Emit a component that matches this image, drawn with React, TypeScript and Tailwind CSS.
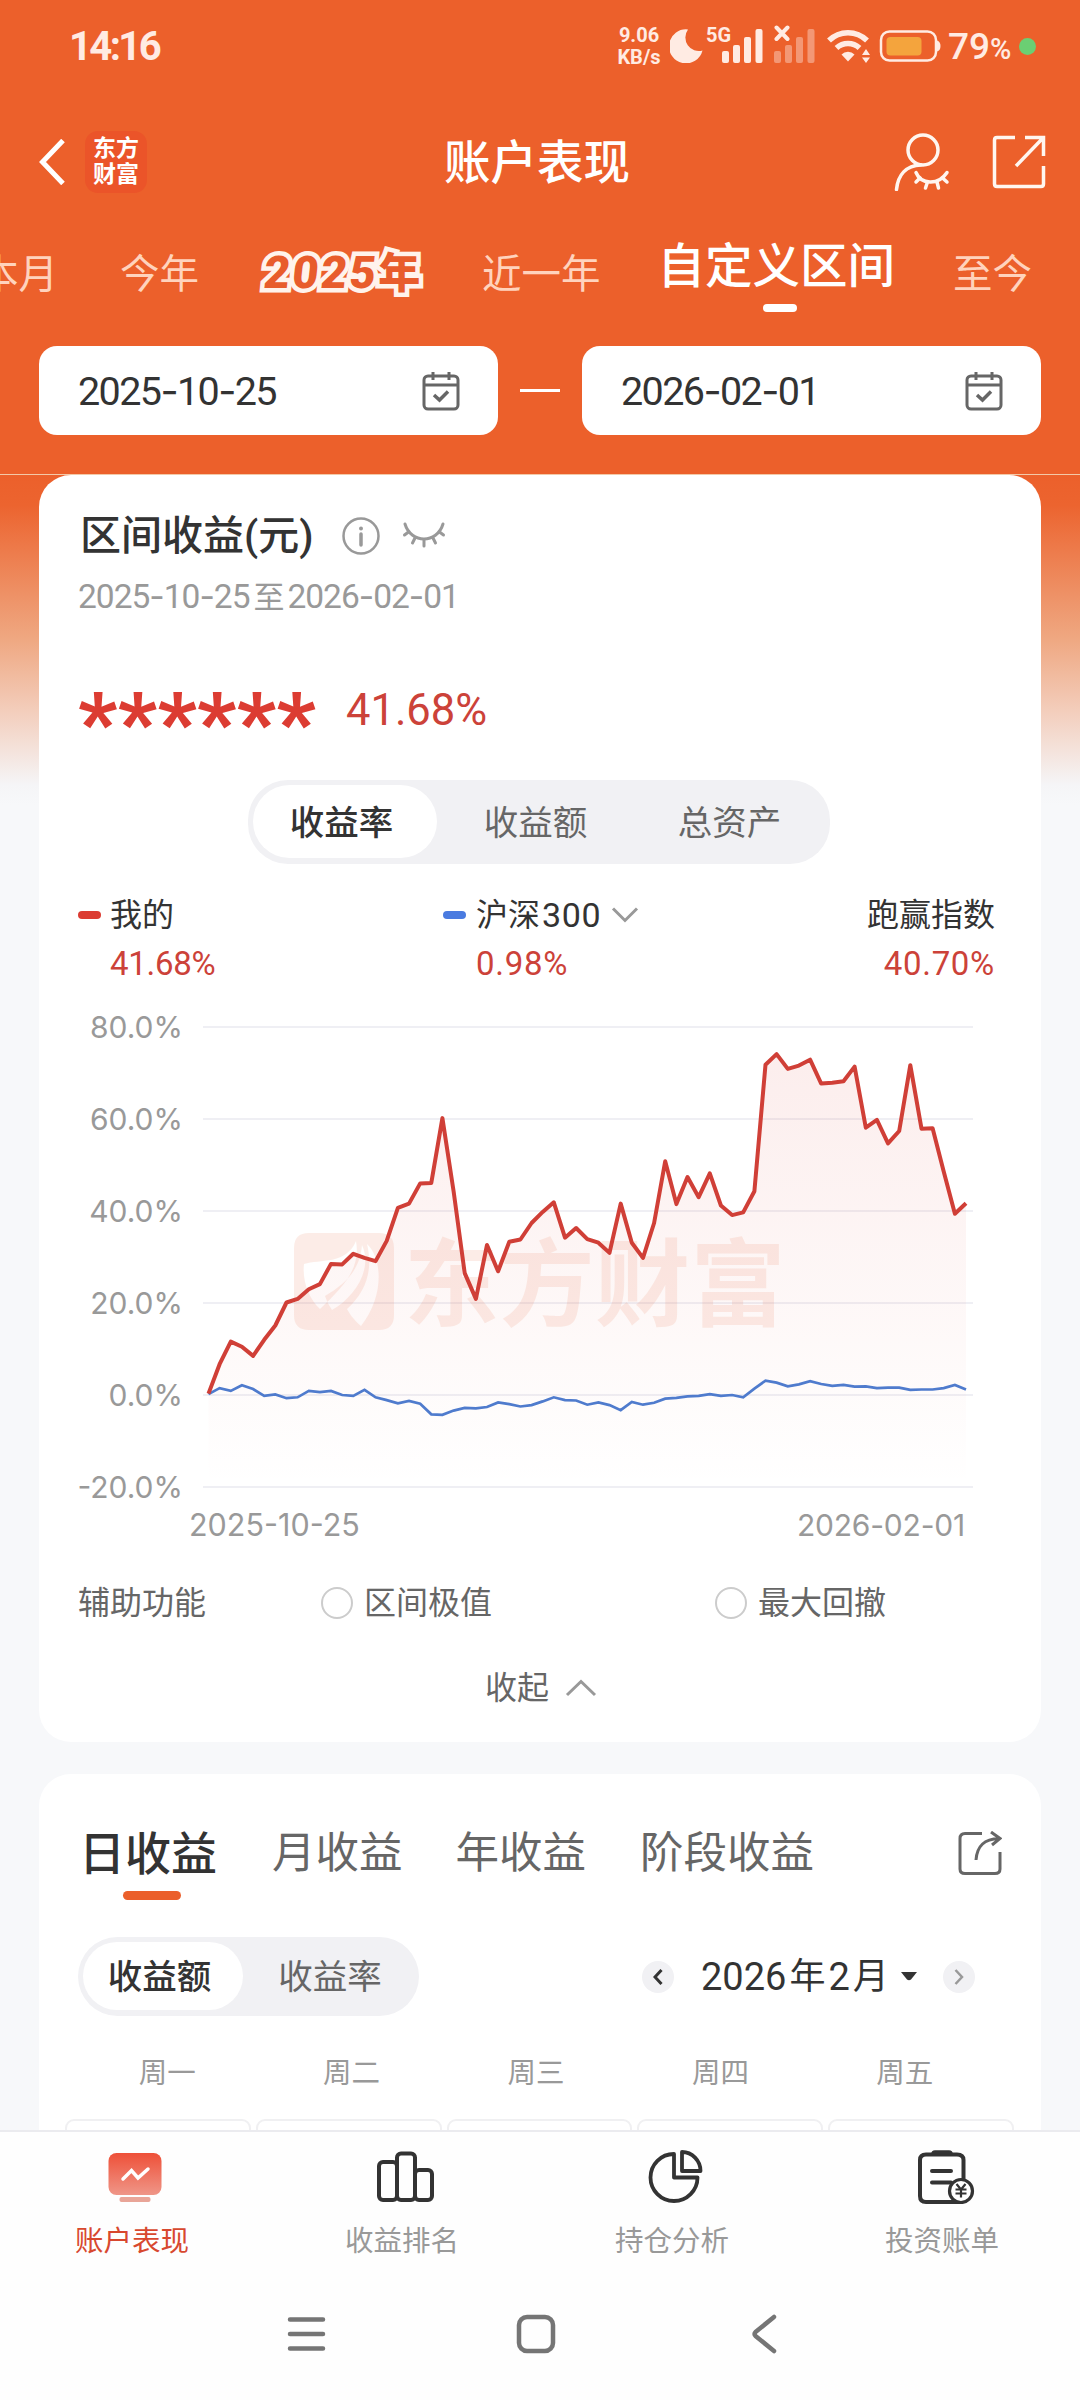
import React from "react";

const MINE = [
  0.3, 6.7, 11.6, 10.5, 8.5, 12.0, 15.1, 20.1, 20.9, 23.0, 24.1, 28.5, 28.4, 30.7, 29.8, 29.1, 33.5,
  40.7, 41.6, 46.0, 46.1, 60.2, 44.3, 26.5, 20.9, 32.6, 26.9, 33.3, 33.8, 37.4, 39.8, 41.9, 34.2, 36.3,
  33.9, 33.1, 30.9, 41.6, 33.1, 29.8, 37.4, 50.8, 41.5, 47.4, 43.0, 48.2, 41.2, 39.1, 39.7, 44.3, 71.8,
  74.1, 70.9, 71.6, 72.9, 67.7, 67.9, 68.2, 71.4, 58.1, 59.8, 54.7, 57.4, 71.7, 57.9, 58.0, 48.6, 39.4,
  41.7,
];

const CSI300 = [
  0.2, 1.5, 0.9, 2.1, 1.3, -0.2, 0.1, -0.7, -0.5, 0.9, 0.6, 0.9, 0, -0.2, 1.1, -0.5, -1.1, -1.8, -1.3,
  -1.9, -4.2, -4.3, -3.4, -2.8, -2.9, -2.6, -1.6, -2.0, -2.5, -2.2, -1.4, -0.5, -1.1, -1.2, -2.1, -1.6,
  -2.2, -3.3, -1.5, -2.1, -1.7, -0.8, -0.6, -0.3, -0.2, 0.2, -0.2, 0, -0.5, 1.4, 3.1, 2.7, 1.9, 2.3,
  3.0, 2.4, 2.0, 2.2, 1.8, 1.9, 1.5, 1.6, 1.6, 1.1, 1.2, 1.2, 1.5, 2.2, 1.2,
];

const Y_TICKS = [80, 60, 40, 20, 0, -20];

const yOf = (v: number) => 20 + (80 - v) * 4.6;
const xOf = (i: number) => 5.5 + i * 11.14;
const toPoints = (data: number[]) =>
  data.map((v, i) => `${xOf(i).toFixed(1)},${yOf(v).toFixed(1)}`).join(" ");

// Digits stay in Roboto, only the dashes use Inter's wider hyphen
function DateText({ value }: { value: string }) {
  const [y, m, d] = value.split("-");
  return (
    <span>
      {y}
      <span className="font-[Inter]">-</span>
      {m}
      <span className="font-[Inter]">-</span>
      {d}
    </span>
  );
}

function SignalBars({ dim = false }: { dim?: boolean }) {
  return (
    <svg width="41" height="34" viewBox="0 0 41 34" fill="#ffebe3" opacity={dim ? 0.4 : 1}>
      <rect x="0" y="22" width="7" height="12" rx="2" />
      <rect x="11" y="16" width="7" height="18" rx="2" />
      <rect x="22" y="8" width="7" height="26" rx="2" />
      <rect x="33.5" y="0" width="7" height="34" rx="2" />
    </svg>
  );
}

function StatusBar() {
  return (
    <div className="flex h-[92px] items-center pr-[44px] pl-[69px] text-[#ffebe3]">
      <span className="pt-[2px] text-[40px] leading-none font-bold tracking-[-2.6px]">14:16</span>
      <div className="ml-auto flex items-center">
        <div className="w-[44px] text-center text-[20px] leading-[22px] font-bold">
          <div>9.06</div>
          <div>KB/s</div>
        </div>
        <svg className="ml-[9px]" width="33" height="34" viewBox="0 0 33 34" fill="#ffebe3">
          <path d="M18 0.5 A17 17 0 1 0 32.5 21.5 A13.5 13.5 0 0 1 18 0.5 Z" />
        </svg>
        <div className="relative ml-[19px] flex">
          <span className="absolute top-[-4px] left-[-16px] text-[20px] leading-none font-bold">5G</span>
          <SignalBars />
        </div>
        <div className="relative ml-[11px] flex">
          <svg className="absolute top-[-4px] left-0" width="16" height="17" viewBox="0 0 16 17" stroke="#ffebe3" strokeWidth="4" strokeLinecap="round">
            <path d="M2.5 2.5 L13.5 14 M13.5 2.5 L2.5 14" />
          </svg>
          <SignalBars dim />
        </div>
        <svg className="ml-[11px]" width="46" height="34" viewBox="0 0 46 34" fill="none" stroke="#ffebe3">
          <path d="M3 11.5 A27 27 0 0 1 41 11.5" strokeWidth="5.5" />
          <path d="M10.5 19 A17 17 0 0 1 33.5 19" strokeWidth="5.5" />
          <path d="M15.5 25.5 A9 9 0 0 1 28.5 25.5 L22 32.5 Z" fill="#ffebe3" stroke="none" />
          <path d="M36 26 L40 20 L44 26 Z M36 28.5 L44 28.5 L40 34 Z" fill="#ffebe3" stroke="none" />
        </svg>
        <svg className="ml-[7px]" width="62" height="34" viewBox="0 0 62 34">
          <rect x="2" y="2.5" width="55" height="29" rx="8.5" fill="none" stroke="#ffebe3" strokeWidth="2.5" />
          <rect x="7.5" y="8" width="35" height="18.5" rx="4" fill="#f4a43d" />
          <path d="M58 11.5 q3.5 1 3.5 5.5 t-3.5 5.5 Z" fill="#ffebe3" />
        </svg>
        <div className="ml-[7px] flex w-[66px] items-baseline leading-none font-medium">
          <span className="text-[37px]">79</span>
          <span className="text-[29px]">%</span>
        </div>
        <span className="ml-[5px] h-[17px] w-[17px] rounded-full bg-[#6bcf73]" />
      </div>
    </div>
  );
}

function TitleBar() {
  return (
    <div className="flex h-[140px] items-center pr-[34px] pl-[39px]">
      <svg width="26" height="46" viewBox="0 0 26 46" fill="none" stroke="#fff" strokeWidth="5">
        <path d="M24 1.5 L3.5 23 L24 44.5" />
      </svg>
      <div className="ml-[20px] flex h-[62px] w-[62px] flex-col items-center justify-center rounded-[13px] bg-[#eb5429] text-[23px] leading-[26px] font-bold text-white">
        <span>东方</span>
        <span>财富</span>
      </div>
      <h1 className="mt-[3px] ml-[297px] text-[46.5px] leading-none font-medium text-white">账户表现</h1>
      <svg className="ml-auto" width="56" height="58" viewBox="0 0 56 58" fill="none" stroke="#fff6f0" strokeWidth="3.5">
        <circle cx="29" cy="17" r="15" />
        <path d="M2.5 56.5 C4 42 12 32.5 27 32" strokeLinecap="round" />
        <path d="M22 39.5 C27 51.5 44 53 53 39.5" strokeLinecap="round" />
        <path d="M26 45 L22 49 M33.5 49 L31.5 55 M43 49 L44.5 55 M48.5 45 L53 49" strokeLinecap="round" />
      </svg>
      <svg className="ml-[42px]" width="54" height="54" viewBox="0 0 54 54" fill="none" stroke="#fff6f0" strokeWidth="3.5">
        <path d="M23 2.5 H5 Q2.5 2.5 2.5 5 V49 Q2.5 51.5 5 51.5 H49 Q51.5 51.5 51.5 49 V31" />
        <path d="M33 2.5 H51.5 V21 M51 3 L24 31" />
      </svg>
    </div>
  );
}

function RangeTabs() {
  return (
    <div className="flex h-[91px] items-start pt-[18px] text-[39.5px] leading-[46px] whitespace-nowrap text-[#ffd3bd]">
      <span className="ml-[-21px] pt-[2px]">本月</span>
      <span className="ml-[62px] pt-[2px]">今年</span>
      <span className="ml-[59px] flex w-[168px] items-baseline justify-center font-bold text-[#e85c2c] [-webkit-text-stroke:9px_#fff3ec] [paint-order:stroke_fill]">
        <span className="-skew-x-6 text-[45px] font-black tracking-[2.5px]">2025</span>
        <span className="text-[42px] font-black">年</span>
      </span>
      <span className="ml-[56px] pt-[2px]">近一年</span>
      <div className="ml-[57px] flex flex-col items-center text-[47.5px] font-medium text-white">
        <span className="mt-[-6px]">自定义区间</span>
        <span className="mt-[14px] ml-[8px] h-[8px] w-[34px] rounded-full bg-white" />
      </div>
      <span className="ml-[58px] pt-[2px]">至今</span>
    </div>
  );
}

function DateInput({ value }: { value: string }) {
  return (
    <div className="flex h-[89px] w-[459px] items-center justify-between rounded-[18px] bg-white pr-[38px] pl-[39px]">
      <span className="pt-[3px] text-[39.5px] leading-none tracking-[-1.6px] text-[#333]">
        <DateText value={value} />
      </span>
      <svg width="38" height="40" viewBox="0 0 38 40" fill="none" stroke="#666" strokeWidth="3">
        <rect x="2" y="5" width="34" height="33" rx="4" />
        <path d="M2 14 H36 M11 1 V9 M27 1 V9" />
        <path d="M12 24 L17.5 29 L26 20.5" strokeWidth="3.5" />
      </svg>
    </div>
  );
}

function Segmented({ items, className, activeClass }: { items: string[]; className: string; activeClass: string }) {
  return (
    <div className={`flex rounded-[40px] bg-[#f1f1f4] text-[34.5px] leading-none text-[#666] ${className}`}>
      {items.map((label, i) => (
        <div key={label} className="flex flex-1 items-center pt-[5px] pb-[6px] pl-[5px]">
          <span
            className={`flex h-full items-center justify-center rounded-[38px] pt-[3px] pr-[7px] ${activeClass} ${
              i === 0 ? "bg-white font-medium text-[#333]" : ""
            }`}
          >
            {label}
          </span>
        </div>
      ))}
    </div>
  );
}

function Watermark() {
  return (
    <g fill="#e8602c" opacity="0.11">
      <path
        fillRule="evenodd"
        d="M106 226 h70 q15 0 15 15 v67 q0 15 -15 15 h-70 q-15 0 -15 -15 v-67 q0 -15 15 -15 Z
          M101 257 C117 252 143 258 153 234 C158 262 140 280 117 302 C106 292 99 274 101 257 Z
          M159 238 C170 262 152 290 129 303 Q124 296 122 289 C144 276 157 262 159 238 Z
          M164 237 C180 252 181 290 158 319 C150 312 146 306 144 302 C164 284 170 262 164 237 Z"
      />
      <text x="201" y="312" fontSize="95" fontWeight="700" letterSpacing="0.5" fontFamily="Noto Sans CJK SC, sans-serif">
        东方财富
      </text>
    </g>
  );
}

function Chart() {
  const line = toPoints(MINE);
  return (
    <div className="font-[Inter] text-[30px] leading-[40px] text-[#999]">
      <div className="flex">
        <div className="flex h-[500px] w-[105px] flex-col items-end justify-between whitespace-nowrap">
          {Y_TICKS.map((t) => (
            <span key={t}>{t.toFixed(1)}%</span>
          ))}
        </div>
        <svg className="ml-[20px]" width="770" height="500" viewBox="0 0 770 500">
          <defs>
            <linearGradient id="area" x1="0" y1="0" x2="0" y2="1">
              <stop offset="0" stopColor="#dc3c32" stopOpacity="0.09" />
              <stop offset="1" stopColor="#dc3c32" stopOpacity="0" />
            </linearGradient>
          </defs>
          {Y_TICKS.map((t) => (
            <line key={t} x1="0" x2="770" y1={yOf(t)} y2={yOf(t)} stroke="#efeff4" strokeWidth="2" />
          ))}
          <Watermark />
          <polygon points={`${xOf(0)},480 ${line} ${xOf(68)},480`} fill="url(#area)" />
          <polyline points={toPoints(CSI300)} fill="none" stroke="#4f7bcd" strokeWidth="2.7" />
          <polyline points={line} fill="none" stroke="#d03f37" strokeWidth="4" strokeLinejoin="round" />
        </svg>
      </div>
      <div className="flex h-[35px] items-center justify-between pr-[37px] pl-[111px]">
        <span className="text-[30.5px]">2025-10-25</span>
        <span className="text-[30px] tracking-[-0.2px]">2026-02-01</span>
      </div>
    </div>
  );
}

function EarningsCard() {
  return (
    <section className="h-[1267px] rounded-[32px] bg-white px-[39px] pt-[31px]">
      <div className="flex h-[60px] items-center">
        <h2 className="ml-[2px] text-[41px] leading-none font-medium text-[#333]">区间收益(元)</h2>
        <svg className="ml-[28px]" width="38" height="38" viewBox="0 0 38 38" fill="none" stroke="#999" strokeWidth="2.5">
          <circle cx="19" cy="19" r="17.5" />
          <path d="M19 17 V28" strokeWidth="3.5" strokeLinecap="round" />
          <circle cx="19" cy="11.5" r="2" fill="#999" stroke="none" />
        </svg>
        <svg className="ml-[22px] mt-[-2px]" width="44" height="26" viewBox="0 0 44 26" fill="none" stroke="#999" strokeWidth="3" strokeLinecap="round">
          <path d="M3 2 C9 22 35 22 41 2" />
          <path d="M6.5 10 L2.5 13 M13 16 L10.5 21 M22 18 V24 M31 16 L33.5 21 M37.5 10 L41.5 13" />
        </svg>
      </div>
      <div className="mt-[11px] flex h-[40px] items-center text-[33.5px] leading-none tracking-[-1px] text-[#999]">
        <DateText value="2025-10-25" />
        <span className="mx-[4px] text-[31px]">至</span>
        <DateText value="2026-02-01" />
      </div>
      <div className="mt-[64px] flex h-[60px] items-center text-[#dc3c32]">
        <span className="h-[60px] w-[268px] text-[84px] leading-[83px] font-black tracking-[0.6px]">******</span>
        <span className="text-[43.5px] leading-none text-[#cc4239]">41.68%</span>
      </div>
      <Segmented items={["收益率", "收益额", "总资产"]} className="mt-[39px] ml-[170px] h-[84px] w-[582px]" activeClass="w-[184px]" />
      <div className="mt-[32px] flex h-[87px] text-[33px] leading-[38px] text-[#333]">
        <div className="flex w-[365px]">
          <span className="mt-[15px] h-[8px] w-[23px] rounded-full bg-[#dc3c32]" />
          <div className="ml-[9px] flex flex-col gap-[11px]">
            <span className="text-[32px]">我的</span>
            <span className="tracking-[-0.3px] text-[#cc4239]">41.68%</span>
          </div>
        </div>
        <div className="flex">
          <span className="mt-[15px] h-[8px] w-[23px] rounded-full bg-[#4a7be0]" />
          <div className="ml-[10px] flex flex-col gap-[11px]">
            <span className="flex items-center text-[32px]">
              沪深<span className="ml-[2px] text-[34px] tracking-[0.6px]">300</span>
              <svg className="ml-[10px]" width="28" height="16" viewBox="0 0 28 16" fill="none" stroke="#999" strokeWidth="3">
                <path d="M2 1.5 L14 13.5 L26 1.5" />
              </svg>
            </span>
            <span className="tracking-[0.7px] text-[#cc4239]">0.98%</span>
          </div>
        </div>
        <div className="ml-auto flex flex-col items-end gap-[11px] pr-[7px]">
          <span className="text-[32px]">跑赢指数</span>
          <span className="tracking-[0.7px] text-[#cc4239]">40.70%</span>
        </div>
      </div>
      <div className="mt-[24px]">
        <Chart />
      </div>
      <div className="mt-[41px] flex h-[40px] items-center text-[32px] leading-none text-[#666]">
        <span>辅助功能</span>
        <span className="ml-[115px] h-[32px] w-[32px] rounded-full border-2 border-[#ccc]" />
        <span className="ml-[11px]">区间极值</span>
        <span className="ml-[223px] h-[32px] w-[32px] rounded-full border-2 border-[#ccc]" />
        <span className="ml-[11px]">最大回撤</span>
      </div>
      <div className="mt-[45px] flex h-[40px] items-center pl-[407px] text-[32px] leading-none text-[#666]">
        <span>收起</span>
        <svg className="ml-[16px]" width="32" height="18" viewBox="0 0 32 18" fill="none" stroke="#999" strokeWidth="3">
          <path d="M2 16 L16 2.5 L30 16" />
        </svg>
      </div>
    </section>
  );
}

function CalendarCard() {
  return (
    <section className="mt-[32px] h-[400px] rounded-t-[32px] bg-white pt-[54px]">
      <div className="flex items-start pr-[39px] pl-[40px] text-[43.5px] leading-[52px] text-[#666]">
        <div className="flex flex-col items-center text-[46px] font-medium text-[#333]">
          <span>日收益</span>
          <span className="mt-[11px] ml-[8px] h-[9px] w-[58px] rounded-full bg-[#eb5f2b]" />
        </div>
        <span className="ml-[55px]">月收益</span>
        <span className="ml-[53px]">年收益</span>
        <span className="ml-[54px]">阶段收益</span>
        <svg className="mt-[3px] ml-auto" width="44" height="44" viewBox="0 0 44 44" fill="none" stroke="#666" strokeWidth="3">
          <path d="M24 2.5 H7 Q2 2.5 2 7.5 V38 Q2 42.5 7 42.5 H37 Q42 42.5 42 38 V21" />
          <path d="M18 29 C19 15 26 8 41 7.5 M33 1 L42 7.5 L34 14" />
        </svg>
      </div>
      <div className="mt-[37px] flex items-center pl-[39px]">
        <Segmented items={["收益额", "收益率"]} className="h-[79px] w-[341px]" activeClass="w-[160px]" />
        <span className="ml-[223px] flex h-[32px] w-[32px] items-center justify-center rounded-full bg-[#f1f1f4]">
          <svg width="10" height="16" viewBox="0 0 10 16" fill="none" stroke="#333" strokeWidth="3">
            <path d="M8.5 1 L2 8 L8.5 15" />
          </svg>
        </span>
        <span className="ml-[27px] flex items-center text-[38px] leading-none text-[#333]">
          <span>2026</span>
          <span className="mx-[3px] text-[36px]">年</span>
          <span>2</span>
          <span className="mx-[3px] text-[36px]">月</span>
        </span>
        <svg className="ml-[9px]" width="16" height="9" viewBox="0 0 16 9" fill="#333">
          <path d="M0 0 H16 L10 7.5 Q8 9 6 7.5 Z" />
        </svg>
        <span className="ml-[26px] flex h-[32px] w-[32px] items-center justify-center rounded-full bg-[#f1f1f4]">
          <svg width="10" height="16" viewBox="0 0 10 16" fill="none" stroke="#999" strokeWidth="2.5">
            <path d="M1.5 1 L8 8 L1.5 15" />
          </svg>
        </span>
      </div>
      <div className="mt-[38px] ml-[36px] grid h-[40px] w-[922px] grid-cols-5 items-center text-center text-[28.5px] leading-none text-[#999]">
        {["一", "二", "三", "四", "五"].map((d) => (
          <span key={d}>周{d}</span>
        ))}
      </div>
      <div className="mt-[25px] ml-[26px] grid w-[949px] grid-cols-5 gap-[5px]">
        {[0, 1, 2, 3, 4].map((i) => (
          <div key={i} className="h-[120px] rounded-[9px] border-2 border-[#f0f0f2]" />
        ))}
      </div>
    </section>
  );
}

function PerformanceIcon() {
  return (
    <svg width="58" height="54" viewBox="0 0 58 54" fill="none">
      <defs>
        <linearGradient id="perf" x1="0" y1="0" x2="0" y2="1">
          <stop offset="0" stopColor="#ee5038" />
          <stop offset="1" stopColor="#ef9688" />
        </linearGradient>
      </defs>
      <rect x="2.5" y="3" width="53" height="42" rx="8" fill="url(#perf)" />
      <rect x="13.5" y="47" width="31" height="5" rx="2" fill="#e9a598" />
      <path d="M17 29 L25.5 20.5 L32 28 L42 19" stroke="#fff" strokeWidth="3.5" strokeLinecap="round" />
    </svg>
  );
}

function RankIcon() {
  return (
    <svg width="58" height="54" viewBox="0 0 58 54" fill="none" stroke="#333" strokeWidth="4">
      <rect x="3" y="12" width="18" height="38" rx="4" />
      <rect x="21" y="3.5" width="18" height="46.5" rx="4" />
      <rect x="39" y="20" width="17" height="30" rx="4" />
    </svg>
  );
}

function PieIcon() {
  return (
    <svg width="58" height="54" viewBox="0 0 58 54" fill="none" stroke="#333" strokeWidth="3.8" strokeLinejoin="round">
      <path d="M28 4 A23.5 23.5 0 1 0 51.5 27.5 H28 Z" />
      <path d="M36 2 V21 H54.5 A18.5 19 0 0 0 36 2 Z" />
    </svg>
  );
}

function BillIcon() {
  return (
    <svg width="60" height="54" viewBox="0 0 60 54" fill="none" stroke="#333" strokeWidth="4">
      <path d="M46 52 H11 Q5 52 5 46 V10 Q5 4.5 11 4.5 H42 Q48.5 4.5 48.5 10 V30" />
      <path d="M17 4 Q17 1 20 1 H34 Q37 1 37 4 Z" fill="#333" strokeWidth="1.5" />
      <path d="M17 21 H36 M17 32.5 H36" strokeLinecap="round" />
      <circle cx="46" cy="41" r="11.5" fill="#fff" strokeWidth="3.2" />
      <path d="M41.5 34 L46 39.5 L50.5 34 M46 39.5 V47.5 M40.5 39.5 H51.5 M40.5 43.5 H51.5" strokeWidth="2.2" />
    </svg>
  );
}

const NAV = [
  { label: "账户表现", icon: <PerformanceIcon />, active: true },
  { label: "收益排名", icon: <RankIcon />, active: false },
  { label: "持仓分析", icon: <PieIcon />, active: false },
  { label: "投资账单", icon: <BillIcon />, active: false },
];

export default function App() {
  return (
    <div className="flex h-[2400px] w-[1080px] flex-col overflow-hidden bg-[#f6f7fa] font-[Roboto,'Noto_Sans_CJK_SC',sans-serif]">
      <header className="h-[475px] overflow-hidden border-b border-[#f3c9a8] bg-[#ec602b]">
        <StatusBar />
        <TitleBar />
        <RangeTabs />
        <div className="mt-[23px] flex items-center justify-between px-[39px]">
          <DateInput value="2025-10-25" />
          <span className="h-[3px] w-[40px] bg-white" />
          <DateInput value="2026-02-01" />
        </div>
      </header>

      <main className="h-[1655px] overflow-hidden bg-[linear-gradient(to_bottom,#ec602b_0px,#ec642f_30px,#efa882_165px,#f3cdbb_235px,#f5f5f7_310px,#f7f8fa_330px)] px-[39px]">
        <EarningsCard />
        <CalendarCard />
      </main>

      <nav className="grid h-[145px] grid-cols-4 border-t-2 border-[#ebebef] bg-[#fefefe]">
        {NAV.map((item) => (
          <div key={item.label} className="flex flex-col items-center pt-[18px]">
            {item.icon}
            <span className={`mt-[21px] mr-[6px] text-[28.5px] leading-[34px] ${item.active ? "text-[#d8482f]" : "text-[#999]"}`}>
              {item.label}
            </span>
          </div>
        ))}
      </nav>

      {/* Android system navigation */}
      <div className="flex h-[125px] items-center bg-[#fefefe] pb-[7px] pl-[287px]">
        <svg width="39" height="38" viewBox="0 0 39 38" stroke="#757575" strokeWidth="4.5" strokeLinecap="round">
          <path d="M3 4.5 H36 M3 19 H36 M3 33.5 H36" />
        </svg>
        <svg className="ml-[190px]" width="40" height="40" viewBox="0 0 40 40" fill="none" stroke="#757575" strokeWidth="4.5">
          <rect x="3" y="3" width="34" height="34" rx="8" />
        </svg>
        <svg className="ml-[195px]" width="27" height="40" viewBox="0 0 27 40" fill="none" stroke="#757575" strokeWidth="4.5" strokeLinecap="round" strokeLinejoin="round">
          <path d="M23 3 L4.5 18 Q2.5 20 4.5 22 L23 37" />
        </svg>
      </div>
    </div>
  );
}
